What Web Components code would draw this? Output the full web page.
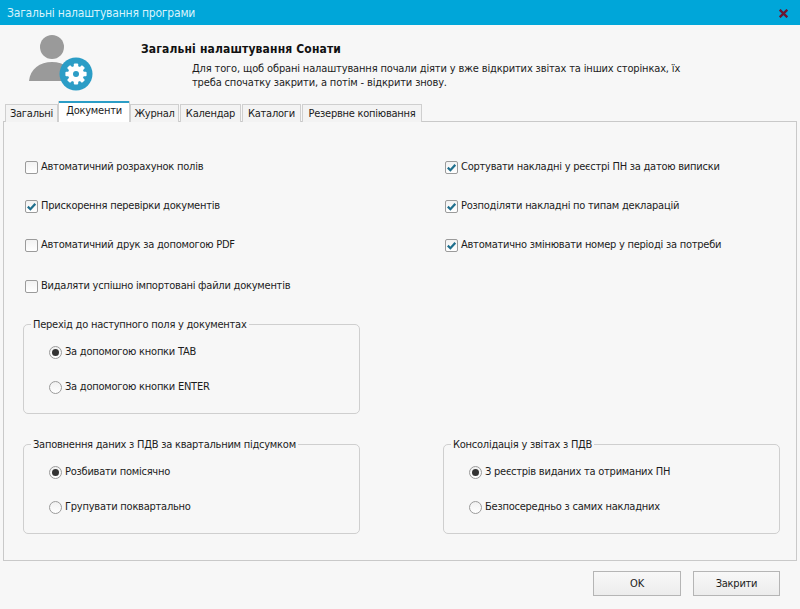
<!DOCTYPE html>
<html lang="uk"><head><meta charset="utf-8"><title>Загальні налаштування</title>
<style>
html,body{margin:0;height:100%}
body{font:11px/14px "DejaVu Sans Condensed","DejaVu Sans",sans-serif;font-stretch:condensed;letter-spacing:-.24px;color:#1c1c1c;background:#f7f7f7;overflow:hidden}
</style></head><body>
<settings-window></settings-window>
<template id="win-t"><style>
:host{display:flex;flex-direction:column;width:800px;height:609px;background:#f7f7f7}
.bar{height:25px;flex:none;background:#00a6d9;color:#d9f3fb;display:flex;align-items:center;justify-content:space-between;padding:0 12px 0 7px;font-size:12px;letter-spacing:-.2px}
.bar svg{display:block;margin-top:1px}
.head{height:76px;flex:none;display:flex;box-sizing:border-box}
.logo{position:relative;width:141px;flex:none}
.logo svg{position:absolute;left:28px;top:10px}
.htext{padding-top:17px}
h1{margin:0;font-size:12px;line-height:14px;font-weight:bold;color:#111;letter-spacing:.15px}
p{margin:6px 0 0 51px;line-height:14px;white-space:nowrap;letter-spacing:-.15px}
.tabs{display:flex;align-items:flex-end;height:21px;flex:none;padding-left:5px;margin-bottom:-1px;position:relative;z-index:1;gap:1px}
.panel{flex:none;margin:0 3px;height:440px;box-sizing:border-box;border:1px solid #c9c9c9;background:#f7f7f7;padding:0 16px 0 19px;display:grid;grid-template-columns:337px 337px;column-gap:83px;align-content:start}
.col{display:flex;flex-direction:column;padding-top:38px}
.col ui-check{margin-bottom:25px}
.col ui-check:nth-of-type(3){margin-bottom:27px}
.col ui-group{margin-top:6px}
.bottom{margin-top:30px}
.foot{flex:1;display:flex;justify-content:flex-end;gap:12px;padding:10px 20px 0 0}
</style>
<div class="bar"><span>Загальні налаштування програми</span>
<svg width="9" height="9" viewBox="0 0 9 9"><path d="M.7 .7 L8.3 8.3 M8.3 .7 L.7 8.3" stroke="#6b1530" stroke-width="2.3"/></svg></div>
<div class="head"><div class="logo">
<svg width="66" height="66" viewBox="0 0 66 66">
<circle cx="24" cy="12" r="12" fill="#9a9a9a"/>
<path d="M1 46 C2 34 12 27 24 27 C36 27 46 34 47 46 Z" fill="#9a9a9a"/>
<circle cx="48" cy="39" r="16.5" fill="#2b9dc6"/>
<g fill="#fff"><circle cx="48" cy="39" r="8"/>
<g><rect x="45.8" y="28.4" width="4.4" height="21.2" rx="1"/><rect x="45.8" y="28.4" width="4.4" height="21.2" rx="1" transform="rotate(45 48 39)"/><rect x="45.8" y="28.4" width="4.4" height="21.2" rx="1" transform="rotate(90 48 39)"/><rect x="45.8" y="28.4" width="4.4" height="21.2" rx="1" transform="rotate(135 48 39)"/></g></g>
<circle cx="48" cy="39" r="3" fill="#2b9dc6"/>
</svg></div>
<div class="htext"><h1>Загальні налаштування Сонати</h1>
<p>Для того, щоб обрані налаштування почали діяти у вже відкритих звітах та інших сторінках, їх<br>треба спочатку закрити, а потім - відкрити знову.</p></div></div>
<div class="tabs">
<ui-tab style="width:53px">Загальні</ui-tab><ui-tab active style="width:70px">Документи</ui-tab><ui-tab style="width:49px">Журнал</ui-tab><ui-tab style="width:61px">Календар</ui-tab><ui-tab style="width:59px">Каталоги</ui-tab><ui-tab style="width:120px">Резервне копіювання</ui-tab>
</div>
<div class="panel">
<div class="col">
<ui-check>Автоматичний розрахунок полів</ui-check>
<ui-check checked>Прискорення перевірки документів</ui-check>
<ui-check>Автоматичний друк за допомогою PDF</ui-check>
<ui-check>Видаляти успішно імпортовані файли документів</ui-check>
<ui-group label="Перехід до наступного поля у документах"><ui-radio checked>За допомогою кнопки TAB</ui-radio><ui-radio>За допомогою кнопки ENTER</ui-radio></ui-group>
</div>
<div class="col">
<ui-check checked>Сортувати накладні у реєстрі ПН за датою виписки</ui-check>
<ui-check checked>Розподіляти накладні по типам декларацій</ui-check>
<ui-check checked>Автоматично змінювати номер у періоді за потреби</ui-check>
</div>
<ui-group class="bottom" label="Заповнення даних з ПДВ за квартальним підсумком"><ui-radio checked>Розбивати помісячно</ui-radio><ui-radio>Групувати поквартально</ui-radio></ui-group>
<ui-group class="bottom" label="Консолідація у звітах з ПДВ"><ui-radio checked>З реєстрів виданих та отриманих ПН</ui-radio><ui-radio>Безпосередньо з самих накладних</ui-radio></ui-group>
</div>
<div class="foot"><ui-button style="width:88px">OK</ui-button><ui-button style="width:87px">Закрити</ui-button></div>
</template>
<script>
const sheetless=(html)=>{const t=document.createElement('template');t.innerHTML=html;return t};
function def(name,tpl){customElements.define(name,class extends HTMLElement{constructor(){super();this.attachShadow({mode:'open'}).appendChild(tpl.content.cloneNode(true))}
connectedCallback(){const l=this.shadowRoot.querySelector('.legend');if(l)l.textContent=this.getAttribute('label')||''}})}
def('ui-tab',sheetless(`<style>
:host{display:flex;align-items:center;justify-content:center;box-sizing:border-box;height:18px;border:1px solid #cfcfcf;border-bottom:none;background:#f3f3f3;white-space:nowrap;padding-top:1px}
:host([active]){height:21px;background:#fff;border:none;border-top:2px solid #2b9dc6;padding:0 0 3px;box-shadow:1px 0 0 #cfcfcf,-1px 0 0 #cfcfcf}
</style><slot></slot>`));
def('ui-check',sheetless(`<style>
:host{display:flex;align-items:center;height:14px;white-space:nowrap;padding-left:2px}
.b{width:13px;height:13px;box-sizing:border-box;border:1px solid #9b9b9b;border-radius:2px;background:linear-gradient(#f2f2f2,#fff);margin-right:3px;flex:none;display:block}
svg{display:none;margin:1px}
:host([checked]) svg{display:block}
</style><span class="b"><svg width="9" height="9" viewBox="0 0 9 9"><path d="M.8 4.6 L3.4 7.2 L8.3 1.8" fill="none" stroke="#1f6f8e" stroke-width="2.2"/></svg></span><slot></slot>`));
def('ui-radio',sheetless(`<style>
:host{display:flex;align-items:center;height:14px;white-space:nowrap}
.r{width:13px;height:13px;box-sizing:border-box;border:1px solid #9b9b9b;border-radius:50%;background:linear-gradient(#f0f0f0,#fff);margin-right:3px;flex:none;display:flex;align-items:center;justify-content:center}
i{display:none;width:7px;height:7px;border-radius:50%;background:#333}
:host([checked]) i{display:block}
</style><span class="r"><i></i></span><slot></slot>`));
def('ui-group',sheetless(`<style>
:host{display:block;position:relative;box-sizing:border-box;height:90px;border:1px solid #cfcfcf;border-radius:5px;padding:20px 0 0 25px}
.legend{position:absolute;left:7px;top:-7px;background:#f7f7f7;padding:0 2px;white-space:nowrap}
.s{display:flex;flex-direction:column;gap:21px}
</style><span class="legend"></span><div class="s"><slot></slot></div>`));
def('ui-button',sheetless(`<style>
:host{display:flex;align-items:center;justify-content:center;box-sizing:border-box;height:25px;border:1px solid #b5b5b5;background:linear-gradient(#f8f8f8,#ececec)}
</style><slot></slot>`));
def('settings-window',document.getElementById('win-t'));
</script>
</body></html>
